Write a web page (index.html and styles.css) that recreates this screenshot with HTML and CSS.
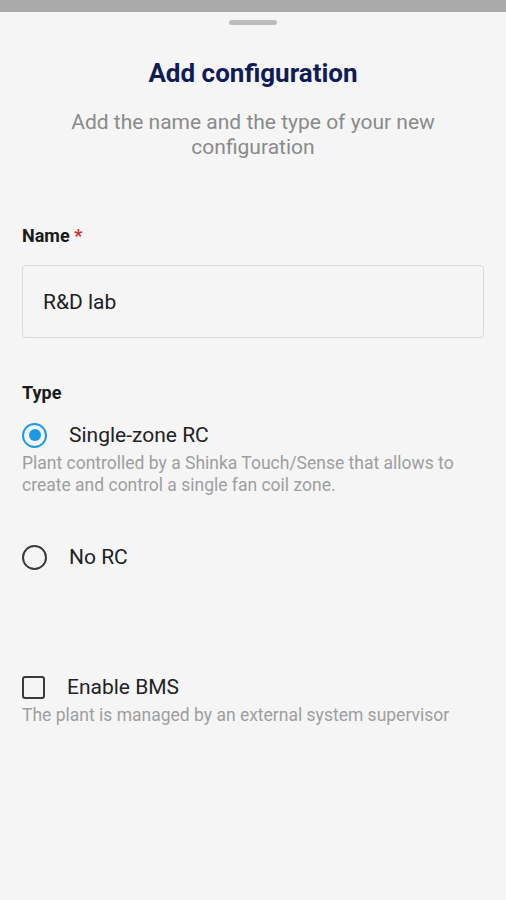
FILE: index.html
```html
<!DOCTYPE html>
<html>
<head>
<meta charset="utf-8">
<link rel="stylesheet" href="styles.css">
</head>
<body>
<div class="status"></div>
<div class="sheet">
  <div class="handle"></div>
  <h1 class="title">Add configuration</h1>
  <p class="subtitle">Add the name and the type of your new configuration</p>

  <div class="label name-label">Name <span class="req">*</span></div>
  <div class="input">R&amp;D lab</div>

  <div class="label type-label">Type</div>
  <div class="option">
    <span class="radio checked"></span>
    <span class="opt-text">Single-zone RC</span>
  </div>
  <p class="desc">Plant controlled by a Shinka Touch/Sense that allows to create and control a single fan coil zone.</p>

  <div class="option no-rc">
    <span class="radio"></span>
    <span class="opt-text">No RC</span>
  </div>

  <div class="option bms">
    <span class="checkbox"></span>
    <span class="opt-text">Enable BMS</span>
  </div>
  <p class="desc">The plant is managed by an external system supervisor</p>
</div>
</body>
</html>
```
FILE: styles.css
```css
html, body {
  margin: 0;
  padding: 0;
  background: #f5f5f5;
  font-family: Roboto, "Noto Sans", sans-serif;
}
.status {
  height: 12px;
  background: #aaaaaa;
}
.sheet {
  padding: 0 22px;
  display: flex;
  flex-direction: column;
}
.handle {
  align-self: center;
  width: 48px;
  height: 5px;
  border-radius: 3px;
  background: #bdbdbd;
  margin-top: 8px;
}
.title {
  margin: 33px 0 0;
  text-align: center;
  font-size: 26px;
  line-height: 30px;
  font-weight: 700;
  color: #101c55;
}
.subtitle {
  margin: 22px auto 0;
  max-width: 420px;
  text-align: center;
  font-size: 21px;
  line-height: 25px;
  color: #8a8a8a;
}
.label {
  font-size: 18px;
  font-weight: 700;
  color: #1a1a1a;
  line-height: 22px;
}
.name-label {
  margin-top: 65px;
}
.req {
  color: #d32f2f;
}
.input {
  margin-top: 18px;
  height: 73px;
  box-sizing: border-box;
  border: 1px solid #d9d9d9;
  border-radius: 4px;
  padding: 0 20px;
  display: flex;
  align-items: center;
  font-size: 21px;
  color: #1e1e1e;
}
.type-label {
  margin-top: 44px;
}
.option {
  display: flex;
  align-items: center;
  height: 26px;
  margin-top: 18px;
  font-size: 21px;
  color: #222;
}
.radio {
  width: 25px;
  height: 25px;
  box-sizing: border-box;
  border: 2px solid #3a3a3a;
  border-radius: 50%;
  margin-right: 22px;
  display: flex;
  align-items: center;
  justify-content: center;
}
.radio.checked {
  border: 2.5px solid #1a9ae4;
}
.radio.checked::after {
  content: "";
  width: 12px;
  height: 12px;
  border-radius: 50%;
  background: #1a9ae4;
}
.desc {
  margin: 4px 0 0;
  font-size: 17.5px;
  line-height: 22px;
  color: #9e9e9e;
}
.no-rc {
  margin-top: 48px;
}
.bms {
  margin-top: 104px;
}
.bms .opt-text {
  margin-left: -2px;
}
.checkbox {
  width: 23px;
  height: 23px;
  box-sizing: border-box;
  border: 2px solid #3a3a3a;
  border-radius: 3px;
  margin-right: 24px;
}
```
